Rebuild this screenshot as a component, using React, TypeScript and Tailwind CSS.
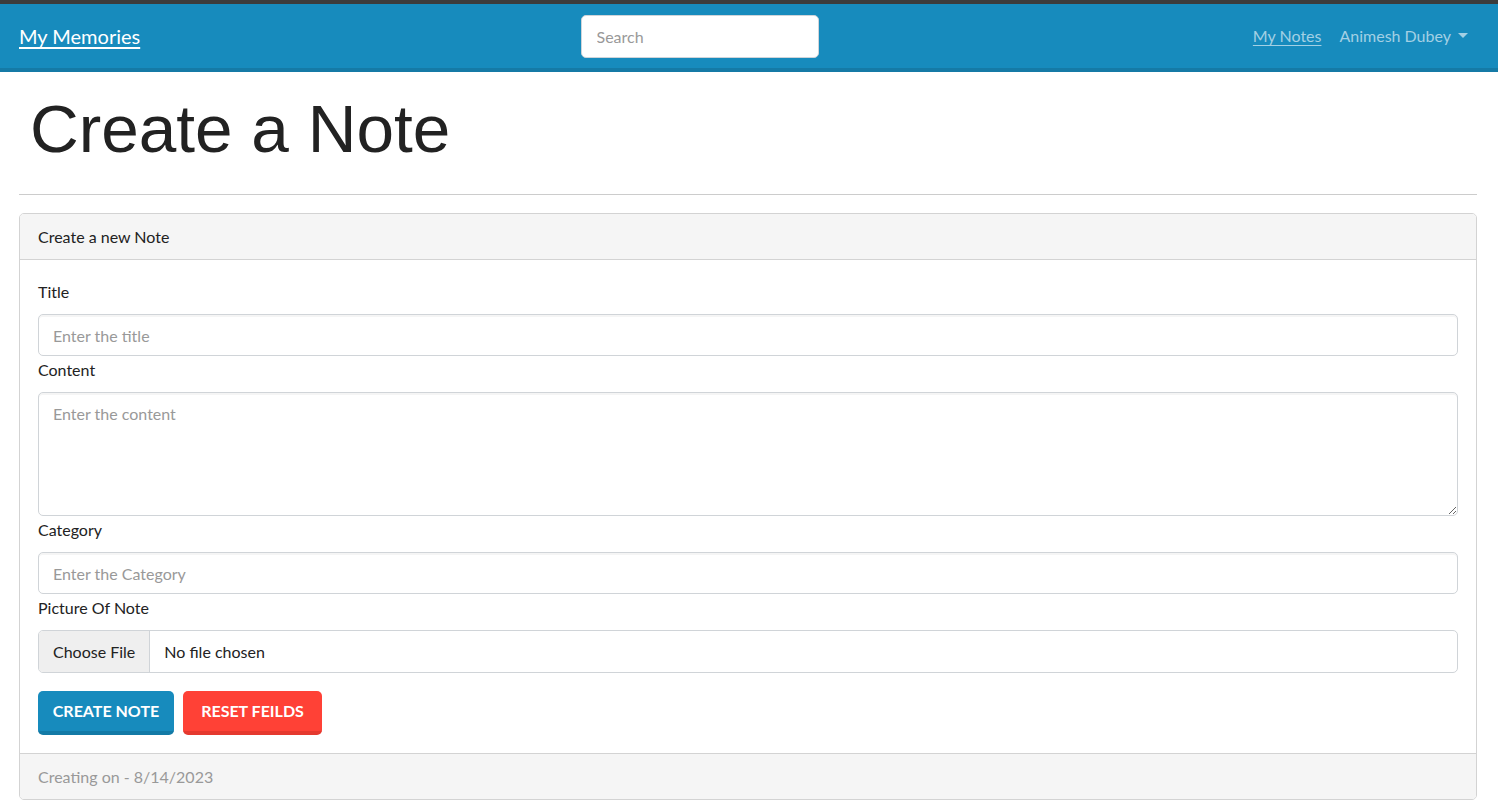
import React from "react";

const font = { fontFamily: "Lato, 'Noto Sans', sans-serif" };

export default function App() {
  return (
    <div className="min-h-[806px] bg-white text-[#222] text-[16px]" style={font}>
      <div className="h-[4px] bg-[#3c3c3c]" />
      <nav className="h-[68px] bg-[#178bbd] border-b-4 border-[#157aa6] flex items-center justify-between pl-[19px] pr-[30px]">
        <a href="#" className="text-white text-[20px] underline underline-offset-[3px] leading-none">
          My Memories
        </a>
        <input
          placeholder="Search"
          className="w-[238px] h-[43px] rounded-[5px] bg-white border border-[#cfd4d9] px-[15px] text-[16px] placeholder:text-[#999] outline-none ml-[6px]"
        />
        <div className="flex items-center gap-[18px] text-[16px] text-[#a3d0e4]">
          <a href="#" className="underline underline-offset-[3px]">My Notes</a>
          <span className="flex items-center gap-[7px]">
            Animesh Dubey
            <span className="inline-block w-0 h-0 border-l-[5px] border-r-[5px] border-t-[5px] border-l-transparent border-r-transparent border-t-[#a3d0e4] mt-[-2px]" />
          </span>
        </div>
      </nav>

      <main className="pl-[19px] pr-[21px] pt-[16px]">
        <h1
          className="pl-[11px] text-[67.5px] leading-[82px] text-[#222]"
          style={{ fontFamily: "'Liberation Sans', Arial, sans-serif" }}
        >
          Create a Note
        </h1>
        <hr className="mt-[24px] border-t border-[#cccccc]" />

        <div className="mt-[18px] border border-[#d3d3d3] rounded-[5px] overflow-hidden">
          <div className="h-[46px] bg-[#f5f5f5] border-b border-[#d3d3d3] flex items-center px-[18px]">
            Create a new Note
          </div>
          <div className="px-[18px] pt-[20px] pb-[18px]">
            <label className="block leading-[24px] mb-[10px]">Title</label>
            <input
              placeholder="Enter the title"
              className="block w-full h-[42px] rounded-[5px] border border-[#d0d4d8] shadow-[inset_0_2px_0_rgba(0,0,0,0.04)] px-[14px] placeholder:text-[#999] outline-none"
            />
            <label className="block leading-[24px] mt-[2px] mb-[10px]">Content</label>
            <textarea
              placeholder="Enter the content"
              className="block w-full h-[124px] rounded-[5px] border border-[#d0d4d8] shadow-[inset_0_2px_0_rgba(0,0,0,0.04)] px-[14px] py-[9px] placeholder:text-[#999] outline-none"
            />
            <label className="block leading-[24px] mt-[2px] mb-[10px]">Category</label>
            <input
              placeholder="Enter the Category"
              className="block w-full h-[42px] rounded-[5px] border border-[#d0d4d8] shadow-[inset_0_2px_0_rgba(0,0,0,0.04)] px-[14px] placeholder:text-[#999] outline-none"
            />
            <label className="block leading-[24px] mt-[2px] mb-[10px]">Picture Of Note</label>
            <div className="flex w-full h-[43px] rounded-[5px] border border-[#d0d4d8] overflow-hidden">
              <span className="flex items-center bg-[#efefef] px-[14px] border-r border-[#d0d4d8]">Choose File</span>
              <span className="flex items-center px-[14px]">No file chosen</span>
            </div>
            <div className="flex gap-[9px] mt-[18px]">
              <button className="h-[44px] w-[136px] rounded-[5px] bg-[#178bbd] border-b-4 border-[#137aa6] text-white font-bold uppercase text-[16px]">
                Create Note
              </button>
              <button className="h-[44px] w-[139px] rounded-[5px] bg-[#ff4136] border-b-4 border-[#e5392f] text-white font-bold uppercase text-[16px]">
                Reset Feilds
              </button>
            </div>
          </div>
          <div className="h-[46px] bg-[#f5f5f5] border-t border-[#d3d3d3] flex items-center px-[18px] text-[#999]">
            Creating on - 8/14/2023
          </div>
        </div>
      </main>
    </div>
  );
}
